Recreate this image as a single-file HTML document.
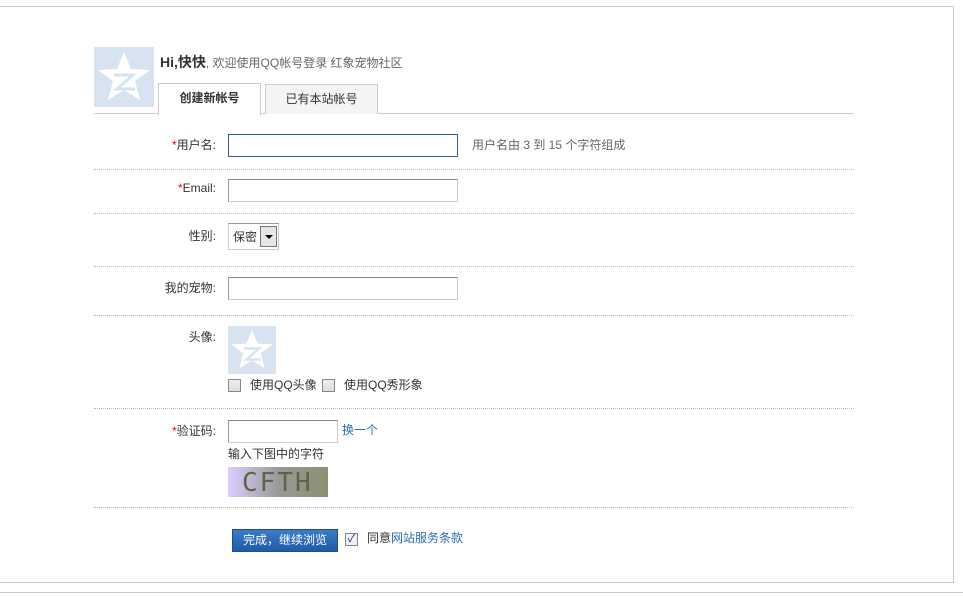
<!DOCTYPE html>
<html><head><meta charset="utf-8"><style>
body{margin:0;width:963px;height:596px;background:#fff;position:relative;overflow:hidden;font-family:"Liberation Sans","Noto Sans CJK SC",sans-serif;font-size:12px;color:#333}
.a{position:absolute}
.box{left:-2px;top:6px;width:954px;height:575px;border:1px solid #ccc}
.bl{left:0;top:592px;width:963px;height:1px;background:#ccc}
.dot{position:absolute;left:94px;width:760px;border-top:1px dotted #bbb}
.lab{position:absolute;right:747px;text-align:right;white-space:nowrap}
.lab b{color:#e00;font-weight:normal}
.inp{position:absolute;left:228px;width:228px;height:21px;border:1px solid #ccc;border-top-color:#888;border-left-color:#999}
.cb{position:absolute;width:11px;height:11px;border:1px solid #888;background:linear-gradient(#eee,#ddd)}
</style></head><body>
<div class="a box"></div><div class="a bl"></div>
<svg class="a" style="left:94px;top:47px" width="60" height="60" viewBox="0 0 60 60"><rect width="60" height="60" fill="#d7e3f1"/><polygon points="30,5 37,22 56,23 41,34 46,53 30,43 14,53 19,34 4,23 23,22" fill="#fff"/><path d="M20 28 L39 28 L23 42 L41 42" stroke="#d7e3f1" stroke-width="3" fill="none"/></svg>
<div class="a" style="left:160px;top:52px;white-space:nowrap"><span style="font-size:14px;font-weight:bold;color:#333">Hi,快快</span><span style="color:#666">, 欢迎使用QQ帐号登录 红象宠物社区</span></div>
<div class="a" style="left:94px;top:113px;width:760px;height:1px;background:#ccc"></div>
<div class="a" style="left:158px;top:83px;width:101px;height:31px;border:1px solid #ccc;border-bottom:none;background:#fff;text-align:center;line-height:29px;font-weight:bold;font-size:12px">创建新帐号</div>
<div class="a" style="left:265px;top:84px;width:111px;height:29px;border:1px solid #ccc;border-bottom:none;background:#f4f4f4;text-align:center;line-height:28px">已有本站帐号</div>
<div class="lab" style="top:136px"><b>*</b>用户名:</div>
<div class="inp" style="top:134px;border:1px solid #2a5d9a"></div>
<div class="a" style="left:472px;top:136px;color:#666">用户名由 3 到 15 个字符组成</div>
<div class="dot" style="top:169px"></div>
<div class="lab" style="top:181px"><b>*</b>Email:</div>
<div class="inp" style="top:179px"></div>
<div class="dot" style="top:213px"></div>
<div class="lab" style="top:227px">性别:</div>
<div class="a" style="left:228px;top:223px;width:49px;height:25px;border:1px solid #ccc;border-top-color:#999"></div>
<div class="a" style="left:233px;top:228px">保密</div>
<div class="a" style="left:260px;top:226px;width:15px;height:19px;border:1px solid #777;background:#e6e6e6"><div style="position:absolute;left:4px;top:8px;border:4px solid transparent;border-top:4px solid #000;border-bottom:none"></div></div>
<div class="dot" style="top:266px"></div>
<div class="lab" style="top:279px">我的宠物:</div>
<div class="inp" style="top:277px"></div>
<div class="dot" style="top:315px"></div>
<div class="lab" style="top:328px">头像:</div>
<svg class="a" style="left:228px;top:326px" width="48" height="48" viewBox="0 0 60 60"><rect width="60" height="60" fill="#d7e3f1"/><polygon points="30,5 37,22 56,23 41,34 46,53 30,43 14,53 19,34 4,23 23,22" fill="#fff"/><path d="M20 28 L39 28 L23 42 L41 42" stroke="#d7e3f1" stroke-width="3" fill="none"/></svg>
<div class="cb" style="left:228px;top:379px"></div>
<div class="a" style="left:250px;top:376px">使用QQ头像</div>
<div class="cb" style="left:322px;top:379px"></div>
<div class="a" style="left:344px;top:376px">使用QQ秀形象</div>
<div class="dot" style="top:408px"></div>
<div class="lab" style="top:422px"><b>*</b>验证码:</div>
<div class="inp" style="top:420px;width:108px"></div>
<div class="a" style="left:342px;top:421px;color:#2a6db3">换一个</div>
<div class="a" style="left:228px;top:445px">输入下图中的字符</div>
<div class="a" style="left:228px;top:467px;width:100px;height:30px;background:linear-gradient(90deg,#dccfff,#999 50%,#8c9070)"><span style="position:absolute;left:14px;top:0;font-size:26px;font-family:'DejaVu Sans Mono',monospace;color:#5f6448;letter-spacing:2px;line-height:32px">CFTH</span></div>
<div class="dot" style="top:507px"></div>
<div class="a" style="left:232px;top:529px;width:104px;height:21px;border:1px solid #1d4d8a;background:linear-gradient(#3a7cc8,#1f5ba8);color:#fff;text-align:center;line-height:20px">完成，继续浏览</div>
<div class="cb" style="left:345px;top:533px;background:#eef;text-align:center;line-height:11px;font-size:11px;color:#235">✓</div>
<div class="a" style="left:367px;top:529px">同意<span style="color:#2a6db3">网站服务条款</span></div>
</body></html>
